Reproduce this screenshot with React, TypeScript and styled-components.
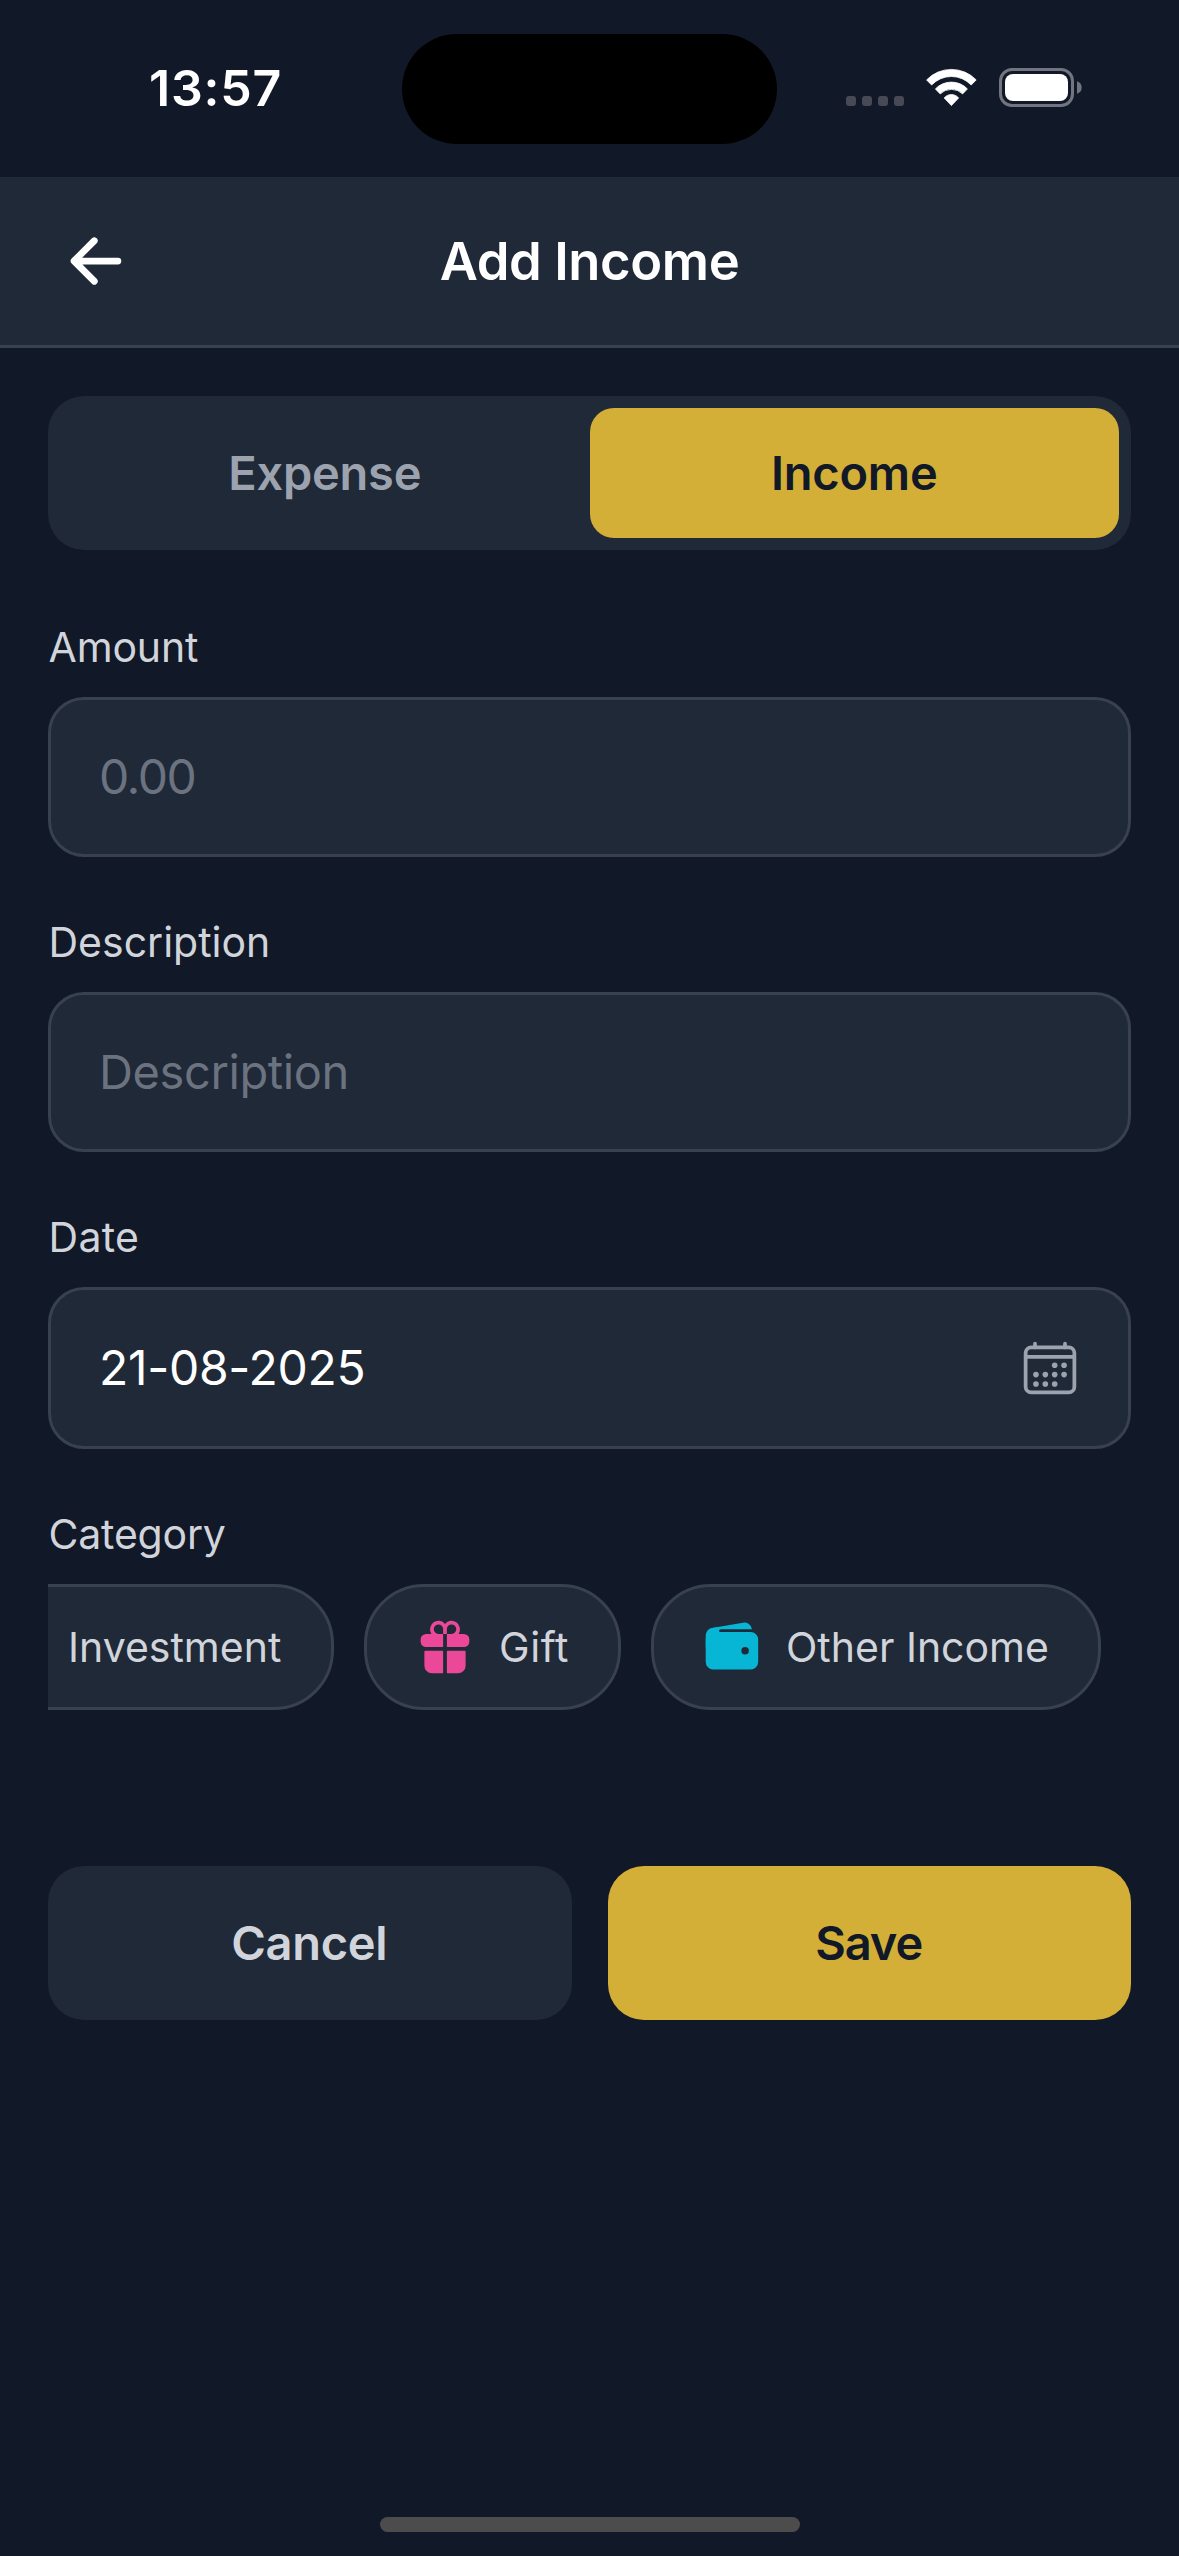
import React from 'react';
import styled, { createGlobalStyle } from 'styled-components';
import {
  IoArrowBack,
  IoCalendarOutline,
  IoGift,
  IoTrendingUp,
  IoWallet,
} from 'react-icons/io5';

const color = {
  background: '#111827',
  surface: '#1f2937',
  border: '#374151',
  gold: '#d4af37',
  text: '#ffffff',
  label: '#d1d5db',
  muted: '#9ca3af',
  placeholder: '#6b7280',
  pink: '#ec4899',
  cyan: '#06b6d4',
};

const GlobalStyle = createGlobalStyle`
  *, *::before, *::after { box-sizing: border-box; }
  body {
    margin: 0;
    background: ${color.background};
    font-family: Inter, 'Liberation Sans', sans-serif;
  }
  button, input { font-family: inherit; margin: 0; }
`;

const Screen = styled.div`
  display: flex;
  flex-direction: column;
  width: 1179px;
  height: 2556px;
  overflow: hidden;
  background: ${color.background};
  color: ${color.text};
`;

/* Status bar */

const StatusBar = styled.div`
  display: grid;
  grid-template-columns: 402px 375px 1fr;
  height: 177px;
  padding-top: 34px;
  align-items: start;
`;

const Clock = styled.div`
  height: 110px;
  padding-left: 149px;
  font-size: 50px;
  font-weight: 600;
  letter-spacing: 0.8px;
  line-height: 109px;
`;

const Island = styled.div`
  height: 110px;
  border-radius: 55px;
  background: #000;
`;

const StatusIcons = styled.div`
  display: flex;
  height: 40px;
  margin: 34px 0 0 69px;
`;

const SignalDots = styled.div`
  display: flex;
  gap: 6px;
  width: 80px;
  padding-top: 28px;

  span {
    width: 10px;
    height: 10px;
    border-radius: 3px;
    background: #474a56;
  }
`;

const WifiIcon = styled.svg`
  width: 51px;
  height: 39px;
`;

const BatteryIcon = styled.svg`
  width: 84px;
  height: 39px;
  margin-left: 22px;
`;

/* Header */

const Header = styled.header`
  display: grid;
  grid-template-columns: 72px 1fr 72px;
  align-items: center;
  height: 171px;
  padding: 0 60px;
  background: ${color.surface};
  border-bottom: 3px solid ${color.border};
`;

const BackButton = styled.button`
  display: flex;
  padding: 0;
  border: 0;
  background: none;
  color: ${color.text};
`;

const Title = styled.h1`
  margin: 0;
  font-size: 52.5px;
  font-weight: 600;
  letter-spacing: -0.4px;
  line-height: 66px;
  text-align: center;
`;

/* Form */

const Content = styled.main`
  display: flex;
  flex-direction: column;
  padding: 48px 48px 0;
`;

const Segmented = styled.div`
  display: grid;
  grid-template-columns: 1fr 1fr;
  height: 154px;
  margin-bottom: 71px;
  padding: 12px;
  border-radius: 36px;
  background: ${color.surface};
`;

const Segment = styled.button<{ $active?: boolean }>`
  padding: 0 0 2px;
  border: 0;
  border-radius: 24px;
  background: ${(p) => (p.$active ? color.gold : 'transparent')};
  color: ${(p) => (p.$active ? color.background : color.muted)};
  font-size: 47px;
  font-weight: 600;
  letter-spacing: -0.25px;
`;

const Field = styled.div`
  display: flex;
  flex-direction: column;
  margin-bottom: 59px;
`;

const Label = styled.label<{ $tracking?: number }>`
  margin-bottom: 24px;
  padding-left: 0.5px;
  color: ${color.label};
  font-size: 41px;
  letter-spacing: ${(p) => p.$tracking ?? 0}px;
  line-height: 52px;
`;

const TextInput = styled.input<{ $tracking: number; $size: number }>`
  width: 100%;
  height: 160px;
  padding: 0 48px 2px;
  border: 3px solid ${color.border};
  border-radius: 36px;
  outline: 0;
  background: ${color.surface};
  color: ${color.text};
  font-size: ${(p) => p.$size}px;
  letter-spacing: ${(p) => p.$tracking}px;

  &::placeholder {
    color: ${color.placeholder};
    opacity: 1;
  }
`;

const DateButton = styled.button`
  display: flex;
  align-items: center;
  justify-content: space-between;
  height: 162px;
  padding: 0 48px;
  border: 3px solid ${color.border};
  border-radius: 36px;
  background: ${color.surface};
  color: ${color.text};
  font-size: 48px;
  letter-spacing: -0.3px;

  span {
    padding-bottom: 2px;
  }

  svg {
    color: ${color.muted};
  }
`;

const ChipScroller = styled.div`
  display: flex;
  justify-content: flex-end;
  gap: 30px;
  padding-right: 30px;
  overflow: hidden;
`;

const Chip = styled.button<{ $width: number; $tracking: number }>`
  display: flex;
  flex: none;
  align-items: center;
  gap: 24px;
  width: ${(p) => p.$width}px;
  height: 126px;
  padding: 0 48px;
  border: 3px solid ${color.border};
  border-radius: 60px;
  background: ${color.surface};
  color: ${color.label};
  font-size: 41px;
  letter-spacing: ${(p) => p.$tracking}px;
  white-space: nowrap;

  span {
    padding-bottom: 1px;
  }

  svg {
    flex: none;
  }
`;

const Actions = styled.div`
  display: grid;
  grid-template-columns: 1fr 1fr;
  gap: 36px;
  margin-top: 97px;
`;

const ActionButton = styled.button<{ $primary?: boolean; $tracking: number }>`
  height: 154px;
  padding: 0 1px 2px 0;
  border: 0;
  border-radius: 36px;
  background: ${(p) => (p.$primary ? color.gold : color.surface)};
  color: ${(p) => (p.$primary ? color.background : color.label)};
  font-size: 47px;
  font-weight: 600;
  letter-spacing: ${(p) => p.$tracking}px;
`;

const HomeIndicator = styled.div`
  width: 420px;
  height: 15px;
  margin: auto auto 24px;
  border-radius: 8px;
  background: #4c4c4c;
`;

const categories = [
  { name: 'Investment', Icon: IoTrendingUp, tint: color.gold, width: 401, tracking: 0 },
  { name: 'Gift', Icon: IoGift, tint: color.pink, width: 257, tracking: 0.6 },
  { name: 'Other Income', Icon: IoWallet, tint: color.cyan, width: 450, tracking: 0 },
];

export default function App() {
  return (
    <>
      <GlobalStyle />
      <Screen>
        <StatusBar>
          <Clock>13:57</Clock>
          <Island />
          <StatusIcons>
            <SignalDots>
              <span />
              <span />
              <span />
              <span />
            </SignalDots>
            <WifiIcon viewBox="0 0 51 39" fill="#fff" stroke="#fff" strokeWidth="0.8" strokeLinejoin="round">
              <path d="M0.6 11.9A34.5 34.5 0 0 1 50.2 11.9L45.2 17A27.3 27.3 0 0 0 5.6 17Z" />
              <path d="M9.4 20.9A22.2 22.2 0 0 1 41.4 20.9L36.6 25.9A16 16 0 0 0 14.2 25.9Z" />
              <path d="M18.2 30A9.2 9.2 0 0 1 32.6 30L25.4 37.6Z" />
            </WifiIcon>
            <BatteryIcon viewBox="0 0 84 39">
              <rect x="1.5" y="1.5" width="72" height="36" rx="11.5" fill="none" stroke="#727580" strokeWidth="3" />
              <rect x="6" y="6" width="63" height="27" rx="8" fill="#fff" />
              <path d="M78 13.2a6.6 6.6 0 0 1 0 12.6z" fill="#727580" />
            </BatteryIcon>
          </StatusIcons>
        </StatusBar>

        <Header>
          <BackButton aria-label="Back">
            <IoArrowBack size={72} />
          </BackButton>
          <Title>Add Income</Title>
        </Header>

        <Content>
          <Segmented>
            <Segment>Expense</Segment>
            <Segment $active>Income</Segment>
          </Segmented>

          <Field>
            <Label $tracking={-0.15}>Amount</Label>
            <TextInput placeholder="0.00" $size={48} $tracking={-1.5} />
          </Field>

          <Field>
            <Label>Description</Label>
            <TextInput placeholder="Description" $size={47} $tracking={-0.4} />
          </Field>

          <Field>
            <Label $tracking={0.3}>Date</Label>
            <DateButton>
              <span>21-08-2025</span>
              <IoCalendarOutline size={60} />
            </DateButton>
          </Field>

          <Field>
            <Label $tracking={-0.2}>Category</Label>
            <ChipScroller>
              {categories.map(({ name, Icon, tint, width, tracking }) => (
                <Chip key={name} $width={width} $tracking={tracking}>
                  <Icon size={60} color={tint} />
                  <span>{name}</span>
                </Chip>
              ))}
            </ChipScroller>
          </Field>

          <Actions>
            <ActionButton $tracking={-0.3}>Cancel</ActionButton>
            <ActionButton $primary $tracking={-1.1}>Save</ActionButton>
          </Actions>
        </Content>

        <HomeIndicator />
      </Screen>
    </>
  );
}
